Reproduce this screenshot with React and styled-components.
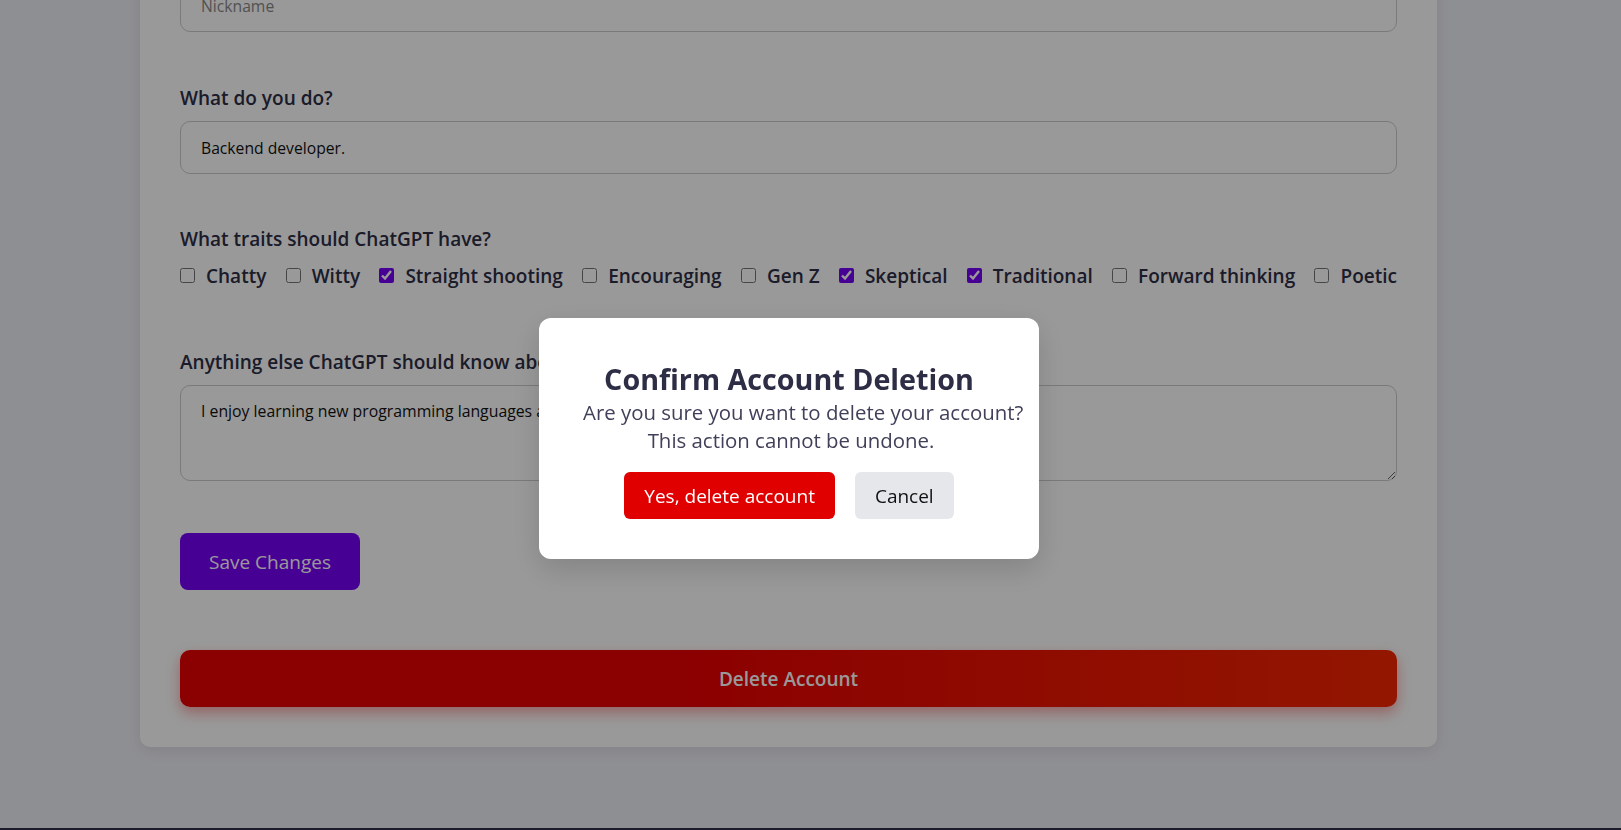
import React, { useState } from "react";
import styled, { createGlobalStyle } from "styled-components";

const GlobalStyle = createGlobalStyle`
  * {
    box-sizing: border-box;
  }
  html, body {
    margin: 0;
    padding: 0;
    background-color: #edeef5;
    font-family: "Open Sans", "Noto Sans", sans-serif;
    overflow: hidden;
  }
`;

const Page = styled.div`
  display: flex;
  flex-direction: column;
  min-height: 830px;
`;

const Main = styled.main`
  display: flex;
  padding: 0 184px 81px 140px;
`;

const Card = styled.div`
  flex: 1;
  display: flex;
  flex-direction: column;
  margin-top: -96px;
  padding: 40px;
  background-color: #ffffff;
  border-radius: 10px;
  box-shadow: 0 4px 14px rgba(0, 0, 0, 0.08);
`;

const Field = styled.div`
  display: flex;
  flex-direction: column;
  margin-top: ${(p) => p.$gap || 0}px;
`;

const Label = styled.label`
  font-size: 19px;
  line-height: 24px;
  font-weight: 600;
  color: #2d2d45;
  margin-bottom: 11px;
`;

const Input = styled.input`
  height: 53px;
  padding: 0 20px;
  border: 1px solid #cccccc;
  border-radius: 10px;
  font-family: inherit;
  font-size: 15.7px;
  color: #111111;
  background: #ffffff;
  outline: none;

  &::placeholder {
    color: #888888;
  }
`;

const TextArea = styled.textarea`
  height: 96px;
  padding: 14px 20px;
  border: 1px solid #cccccc;
  border-radius: 10px;
  font-family: inherit;
  font-size: 15.8px;
  line-height: 22px;
  color: #111111;
  resize: vertical;
  outline: none;
`;

const TraitRow = styled.div`
  display: flex;
  justify-content: space-between;
  align-items: center;
  gap: 12px;
  height: 27px;
`;

const Trait = styled.label`
  display: flex;
  align-items: center;
  gap: 11px;
  font-size: 19px;
  font-weight: 600;
  color: #2d2d45;
  white-space: nowrap;
`;

const Check = styled.input`
  width: 15px;
  height: 15px;
  margin: 0;
  accent-color: #7600f5;
`;

const SaveButton = styled.button`
  align-self: flex-start;
  margin-top: 52px;
  height: 57px;
  padding: 0 29px;
  border: none;
  border-radius: 8px;
  background-color: #7600f5;
  color: #ffffff;
  font-family: inherit;
  font-size: 19px;
  cursor: pointer;
`;

const DeleteButton = styled.button`
  margin-top: 60px;
  height: 57px;
  border: none;
  border-radius: 10px;
  background: linear-gradient(to right, #e80000 0%, #e80000 40%, #f52600 100%);
  box-shadow: 0 6px 14px rgba(232, 0, 0, 0.35);
  color: #ffffff;
  font-family: inherit;
  font-size: 19px;
  font-weight: 600;
  cursor: pointer;
`;

const Footer = styled.footer`
  margin-top: auto;
  height: 3px;
  background-color: #2f2f4a;
`;

const Overlay = styled.div`
  position: fixed;
  inset: 0;
  display: flex;
  align-items: center;
  justify-content: center;
  padding: 47px 43px 0 0;
  background-color: rgba(0, 0, 0, 0.4);
`;

const Dialog = styled.div`
  width: 500px;
  padding: 40px;
  border-radius: 12px;
  background-color: #ffffff;
  text-align: center;
  box-shadow: 0 10px 30px rgba(0, 0, 0, 0.15);
`;

const Title = styled.h2`
  margin: 3px 0 1px;
  font-size: 28.7px;
  line-height: 36px;
  font-weight: 700;
  color: #2d2d45;
  white-space: nowrap;
`;

const Message = styled.p`
  margin: 0;
  padding-left: 4px;
  font-size: 20.4px;
  line-height: 28px;
  color: #40405a;
  white-space: nowrap;
`;

const Actions = styled.div`
  display: flex;
  justify-content: center;
  gap: 20px;
  margin-top: 18px;
`;

const DialogButton = styled.button`
  height: 47px;
  padding: 0 20px;
  border: none;
  border-radius: 6px;
  background-color: ${(p) => (p.$danger ? "#e00000" : "#e5e7eb")};
  color: ${(p) => (p.$danger ? "#ffffff" : "#111111")};
  font-family: inherit;
  font-size: 19px;
  cursor: pointer;
`;

const traits = [
  { name: "Chatty", checked: false },
  { name: "Witty", checked: false },
  { name: "Straight shooting", checked: true },
  { name: "Encouraging", checked: false },
  { name: "Gen Z", checked: false },
  { name: "Skeptical", checked: true },
  { name: "Traditional", checked: true },
  { name: "Forward thinking", checked: false },
  { name: "Poetic", checked: false },
];

const App = () => {
  const [selected, setSelected] = useState(traits.map((t) => t.checked));
  const [showConfirm, setShowConfirm] = useState(true);

  const toggleTrait = (index) => {
    setSelected(selected.map((v, i) => (i === index ? !v : v)));
  };

  return (
    <Page>
      <GlobalStyle />
      <Main>
        <Card>
          <Field>
            <Label>What should ChatGPT call you?</Label>
            <Input placeholder="Nickname" />
          </Field>
          <Field $gap={54}>
            <Label>What do you do?</Label>
            <Input defaultValue="Backend developer." />
          </Field>
          <Field $gap={53}>
            <Label>What traits should ChatGPT have?</Label>
            <TraitRow>
              {traits.map((trait, i) => (
                <Trait key={trait.name}>
                  <Check
                    type="checkbox"
                    checked={selected[i]}
                    onChange={() => toggleTrait(i)}
                  />
                  {trait.name}
                </Trait>
              ))}
            </TraitRow>
          </Field>
          <Field $gap={61}>
            <Label>Anything else ChatGPT should know about you?</Label>
            <TextArea defaultValue="I enjoy learning new programming languages and building side projects." />
          </Field>
          <SaveButton>Save Changes</SaveButton>
          <DeleteButton onClick={() => setShowConfirm(true)}>
            Delete Account
          </DeleteButton>
        </Card>
      </Main>
      <Footer />
      {showConfirm && (
        <Overlay>
          <Dialog>
            <Title>Confirm Account Deletion</Title>
            <Message>
              Are you sure you want to delete your account?
              <br />
              This action cannot be undone.
            </Message>
            <Actions>
              <DialogButton $danger>Yes, delete account</DialogButton>
              <DialogButton onClick={() => setShowConfirm(false)}>
                Cancel
              </DialogButton>
            </Actions>
          </Dialog>
        </Overlay>
      )}
    </Page>
  );
};

export default App;
